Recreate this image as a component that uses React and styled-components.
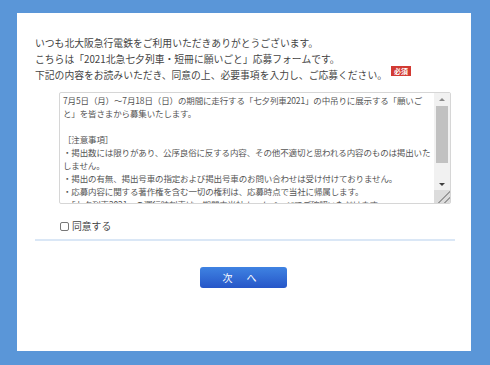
import React from "react";
import styled, { createGlobalStyle } from "styled-components";

const Global = createGlobalStyle`
  html, body {
    margin: 0;
    padding: 0;
    background: #5a96d8;
  }
  body {
    font-family: "Noto Sans CJK JP", "Noto Sans", sans-serif;
    color: #444;
  }
`;

const Page = styled.div`
  padding: 13px 19px 14px 17px;
  height: 365px;
  box-sizing: border-box;
`;

const Panel = styled.div`
  background: #fff;
  height: 338px;
  box-sizing: border-box;
  padding: 22px 16px 0 18px;
`;

const Intro = styled.p`
  margin: 0;
  font-size: 9.8px;
  line-height: 16px;
  color: #444;
  white-space: nowrap;
`;

const Badge = styled.span`
  display: inline-block;
  margin: -1px 0 0 4px;
  padding: 0 3px;
  height: 10px;
  background: #d23a33;
  color: #fff;
  font-size: 7px;
  line-height: 10px;
  font-weight: 700;
  vertical-align: top;
`;

const TermsBox = styled.div`
  display: flex;
  box-sizing: border-box;
  margin: 9px 0 0 24px;
  width: 392px;
  height: 112px;
  border: 1px solid #d6d6d6;
  border-radius: 2px;
  overflow: hidden;
`;

const TermsText = styled.div`
  flex: 1;
  padding: 1px 1px 0 3px;
  overflow: hidden;
  white-space: pre-wrap;
  line-break: strict;
  font-size: 8.53px;
  letter-spacing: -0.15px;
  line-height: 13px;
  color: #555;
`;

const ScrollBar = styled.div`
  width: 16px;
  display: flex;
  flex-direction: column;
  background: #f1f1f1;
`;

const Arrow = styled.div`
  height: ${(p) => (p.$down ? "12px" : "13px")};
  display: flex;
  align-items: center;
  justify-content: center;

  &::after {
    content: "";
    width: 0;
    height: 0;
    border-left: 3px solid transparent;
    border-right: 3px solid transparent;
    ${(p) =>
      p.$down
        ? "border-top: 3px solid #404040;"
        : "border-bottom: 3px solid #8a8a8a;"}
  }
`;

const Track = styled.div`
  flex: 1;
  padding: 0 2px;
`;

const Thumb = styled.div`
  height: 57px;
  background: #c1c1c1;
`;

const Resizer = styled.div`
  height: 13px;
  background:
    linear-gradient(135deg, transparent 58%, #9a9a9a 58%, #9a9a9a 64%, transparent 64%, transparent 78%, #9a9a9a 78%, #9a9a9a 84%, transparent 84%),
    #dcdcdc;
`;

const AgreeRow = styled.div`
  display: flex;
  align-items: center;
  gap: 3px;
  margin: 14px 0 0 25px;
  font-size: 9.8px;
  line-height: 16px;
  color: #444;
`;

const Box = styled.input`
  appearance: none;
  margin: 0;
  width: 9px;
  height: 9px;
  flex: none;
  border: 1px solid #777;
  border-radius: 2px;
  background: #fff;
`;

const Divider = styled.hr`
  margin: 5px 0 0 0;
  border: none;
  height: 2px;
  background: #dae7f6;
`;

const Actions = styled.div`
  display: flex;
  justify-content: center;
  padding-top: 26px;
  padding-right: 4px;
`;

const NextButton = styled.button`
  width: 87px;
  height: 21px;
  padding: 0 5px 0 0;
  border: none;
  border-radius: 3px;
  background: linear-gradient(#3f83e2, #2656c8);
  color: #fff;
  font-family: "Noto Sans CJK JP", "Noto Sans", sans-serif;
  font-size: 10px;
  letter-spacing: 2px;
  cursor: pointer;
`;

const termsText = `7月5日（月）～7月18日（日）の期間に走行する「七夕列車2021」の中吊りに展示する「願いごと」を皆さまから募集いたします。

［注意事項］
・掲出数には限りがあり、公序良俗に反する内容、その他不適切と思われる内容のものは掲出いたしません。
・掲出の有無、掲出号車の指定および掲出号車のお問い合わせは受け付けておりません。
・応募内容に関する著作権を含む一切の権利は、応募時点で当社に帰属します。
・「七夕列車2021」の運行時刻表は、期間中当社ホームページでご確認いただけます。
・応募いただいた個人情報は、本企画の運営以外の目的には使用いたしません。
・応募の受付は、お一人様1回限りとさせていただきます。`;

export default function App() {
  return (
    <>
      <Global />
      <Page>
        <Panel>
          <Intro>
            いつも北大阪急行電鉄をご利用いただきありがとうございます。
            <br />
            こちらは「2021北急七夕列車・短冊に願いごと」応募フォームです。
            <br />
            下記の内容をお読みいただき、同意の上、必要事項を入力し、ご応募ください。
            <Badge>必須</Badge>
          </Intro>
          <TermsBox>
            <TermsText>{termsText}</TermsText>
            <ScrollBar>
              <Arrow />
              <Track>
                <Thumb />
              </Track>
              <Arrow $down />
              <Resizer />
            </ScrollBar>
          </TermsBox>
          <AgreeRow>
            <Box type="checkbox" id="agree" />
            <label htmlFor="agree">同意する</label>
          </AgreeRow>
          <Divider />
          <Actions>
            <NextButton type="button">次　へ</NextButton>
          </Actions>
        </Panel>
      </Page>
    </>
  );
}
